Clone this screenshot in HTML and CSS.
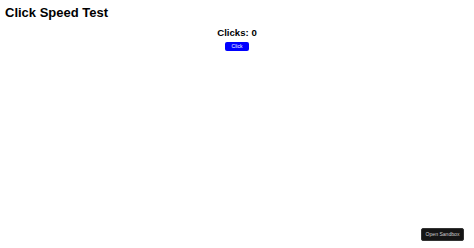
FILE: index.html
```html
<!DOCTYPE html>
<html lang="en">
<head>
  <meta charset="UTF-8" />
  <meta name="viewport" content="width=device-width, initial-scale=1.0"/>
  <title>Click Speed Test</title>
  <link rel="stylesheet" href="styles.css">
</head>
<body>

  <h1 class="title">Click Speed Test</h1>

  <!-- Counter -->
  <div class="counter">
    <h2 id="clicks">Clicks: 0</h2>
    <button id="clickBtn" class="click-button">Click</button>
  </div>

  <a class="sandbox-link" href="#">Open Sandbox</a>

  <script>
    let clicks = 0;
    document.getElementById('clickBtn').addEventListener('click', () => {
      clicks++;
      document.getElementById('clicks').textContent = 'Clicks: ' + clicks;
    });
  </script>
</body>
</html>
```

FILE: styles.css
```css
body {
  font-family: "Liberation Sans", Arial, sans-serif;
  margin: 0;
  background: #fff;
  color: #000;
}

.title {
  font-size: 13px;
  line-height: 15px;
  margin: 5px 5px 0;
}

.counter {
  display: flex;
  flex-direction: column;
  align-items: center;
  margin-top: 7px;
}

.counter h2 {
  font-size: 9.6px;
  line-height: 12px;
  margin: 0 0 3px;
}

.click-button {
  background-color: #0000ff;
  color: white;
  border: none;
  width: 24px;
  height: 9px;
  padding: 0;
  font-family: "Liberation Sans", Arial, sans-serif;
  font-size: 5px;
  line-height: 9px;
  border-radius: 2px;
  cursor: pointer;
}

/* Sandbox button floats over page */
.sandbox-link {
  position: fixed;
  right: 10px;
  bottom: 7px;
  width: 43px;
  height: 13px;
  background: #151515;
  color: #d0d0d0;
  border: 1px solid #333;
  box-sizing: border-box;
  border-radius: 2px;
  font-size: 5.1px;
  line-height: 11px;
  text-align: center;
  text-decoration: none;
}
```
